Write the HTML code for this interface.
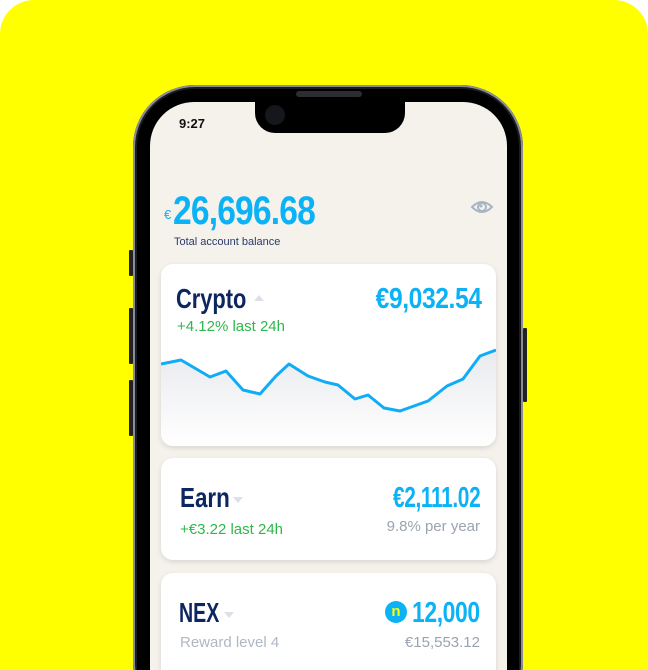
<!DOCTYPE html>
<html><head><style>
html,body{margin:0;width:648px;height:670px;overflow:hidden}
body{background:#fff;font-family:"Liberation Sans",sans-serif}
#w{position:relative;width:648px;height:670px;overflow:hidden}
.bg{position:absolute;left:0;top:0;width:648px;height:670px;background:#ffff00;border-radius:34px 34px 0 0}
.frame{position:absolute;left:133px;top:85px;width:390px;height:640px;border-radius:62px;background:#1b1c22;box-shadow:0 0 0 2px #8b8d96 inset}
.bez{position:absolute;left:137px;top:89px;width:382px;height:640px;border-radius:58px;background:#000}
.screen{position:absolute;left:150px;top:102px;width:357px;height:620px;border-radius:44px;background:#f5f2ec;overflow:hidden}
.notch{position:absolute;left:255px;top:100px;width:150px;height:33px;background:#000;border-radius:0 0 20px 20px}
.cam{position:absolute;left:265px;top:105px;width:20px;height:20px;border-radius:50%;background:#15171c}
.spk{position:absolute;left:296px;top:91px;width:66px;height:6px;border-radius:3px;background:#2b2d33}
.btn{position:absolute;background:#222;width:4px;border-radius:1px}
.card{position:absolute;left:161px;width:335px;background:#fff;border-radius:12px;box-shadow:0 2px 6px rgba(0,0,0,.12);overflow:hidden}
.cond{font-weight:bold;position:absolute;white-space:nowrap;transform-origin:left top}
.r{transform-origin:right top}
.t{position:absolute;white-space:nowrap}
.tri{position:absolute;width:0;height:0;border-left:5px solid transparent;border-right:5px solid transparent}
</style></head><body><div id="w">
<div class="bg"></div>
<div class="btn" style="left:129px;top:250px;height:26px"></div>
<div class="btn" style="left:129px;top:308px;height:56px"></div>
<div class="btn" style="left:129px;top:380px;height:56px"></div>
<div class="btn" style="left:523px;top:328px;height:74px"></div>
<div class="frame"></div>
<div class="bez"></div>
<div class="screen"></div>
<div class="notch"></div>
<div class="cam"></div>
<div class="spk"></div>
<div class="t" style="left:179px;top:116px;font-size:13px;font-weight:bold;color:#111">9:27</div>
<div class="t" style="left:164px;top:207px;font-size:13px;color:#10b0f5">€</div>
<div class="cond" style="left:173px;top:189px;font-size:40px;color:#0cb2f6;letter-spacing:-1px;transform:scaleX(.84)">26,696.68</div>
<div class="t" style="left:174px;top:236px;font-size:11px;color:#2a3a6a">Total account balance</div>
<svg style="position:absolute;left:470px;top:198px" width="24" height="18" viewBox="0 0 24 18"><path d="M2 9 Q12 -1 22 9 Q12 19 2 9Z" fill="none" stroke="#a8b4c4" stroke-width="2"/><circle cx="12" cy="9" r="4" fill="none" stroke="#a8b4c4" stroke-width="2"/><circle cx="11" cy="8" r="1.5" fill="#a8b4c4"/></svg>

<div class="card" style="top:264px;height:182px"></div>
<svg style="position:absolute;left:161px;top:264px;border-radius:12px" width="335" height="182"><defs><linearGradient id="g" x1="0" y1="0" x2="0" y2="1"><stop offset="0" stop-color="#e9eaee"/><stop offset="1" stop-color="#fff"/></linearGradient></defs>
<path d="M0 100 L20 96 L49 113 L65 107 L82 126 L99 130 L115 112 L128 100 L147 112 L164 118 L177 121 L194 135 L207 131 L223 144 L239 147 L267 137 L286 122 L302 115 L319 92 L335 86 L335 182 L0 182Z" fill="url(#g)"/>
<path d="M0 100 L20 96 L49 113 L65 107 L82 126 L99 130 L115 112 L128 100 L147 112 L164 118 L177 121 L194 135 L207 131 L223 144 L239 147 L267 137 L286 122 L302 115 L319 92 L335 86" fill="none" stroke="#10acf5" stroke-width="3" stroke-linejoin="round"/></svg>
<div class="cond" style="left:176px;top:283px;font-size:28px;color:#0d2560;transform:scaleX(.78)">Crypto</div>
<div class="tri" style="left:254px;top:295px;border-bottom:6px solid #dde0e8"></div>
<div class="cond r" style="right:166px;top:283px;font-size:29px;color:#0cb2f6;letter-spacing:-.5px;transform:scaleX(.85)">€9,032.54</div>
<div class="t" style="left:177px;top:318px;font-size:15px;color:#2db84a">+4.12% last 24h</div>

<div class="card" style="top:458px;height:102px"></div>
<div class="cond" style="left:180px;top:482px;font-size:28px;color:#0d2560;transform:scaleX(.8)">Earn</div>
<div class="tri" style="left:233px;top:497px;border-top:6px solid #dde0e8"></div>
<div class="cond r" style="right:168px;top:482px;font-size:29px;color:#0cb2f6;letter-spacing:-.5px;transform:scaleX(.72)">€2,111.02</div>
<div class="t" style="left:180px;top:521px;font-size:15px;color:#2db84a">+€3.22 last 24h</div>
<div class="t" style="right:168px;top:518px;font-size:15px;color:#9aa3b0">9.8% per year</div>

<div class="card" style="top:573px;height:120px"></div>
<div class="cond" style="left:179px;top:597px;font-size:28px;color:#0d2560;transform:scaleX(.7)">NEX</div>
<div class="tri" style="left:224px;top:612px;border-top:6px solid #dde0e8"></div>
<div style="position:absolute;left:385px;top:601px;width:22px;height:22px;border-radius:50%;background:#0cb2f6;color:#ff0;font-weight:bold;font-size:15px;text-align:center;line-height:22px">n</div>
<div class="cond r" style="right:168px;top:597px;font-size:29px;color:#0cb2f6;letter-spacing:-.5px;transform:scaleX(.79)">12,000</div>
<div class="t" style="left:180px;top:634px;font-size:15px;color:#b0b7c3">Reward level 4</div>
<div class="t" style="right:168px;top:634px;font-size:15px;color:#9aa3b0">€15,553.12</div>
</div></body></html>
